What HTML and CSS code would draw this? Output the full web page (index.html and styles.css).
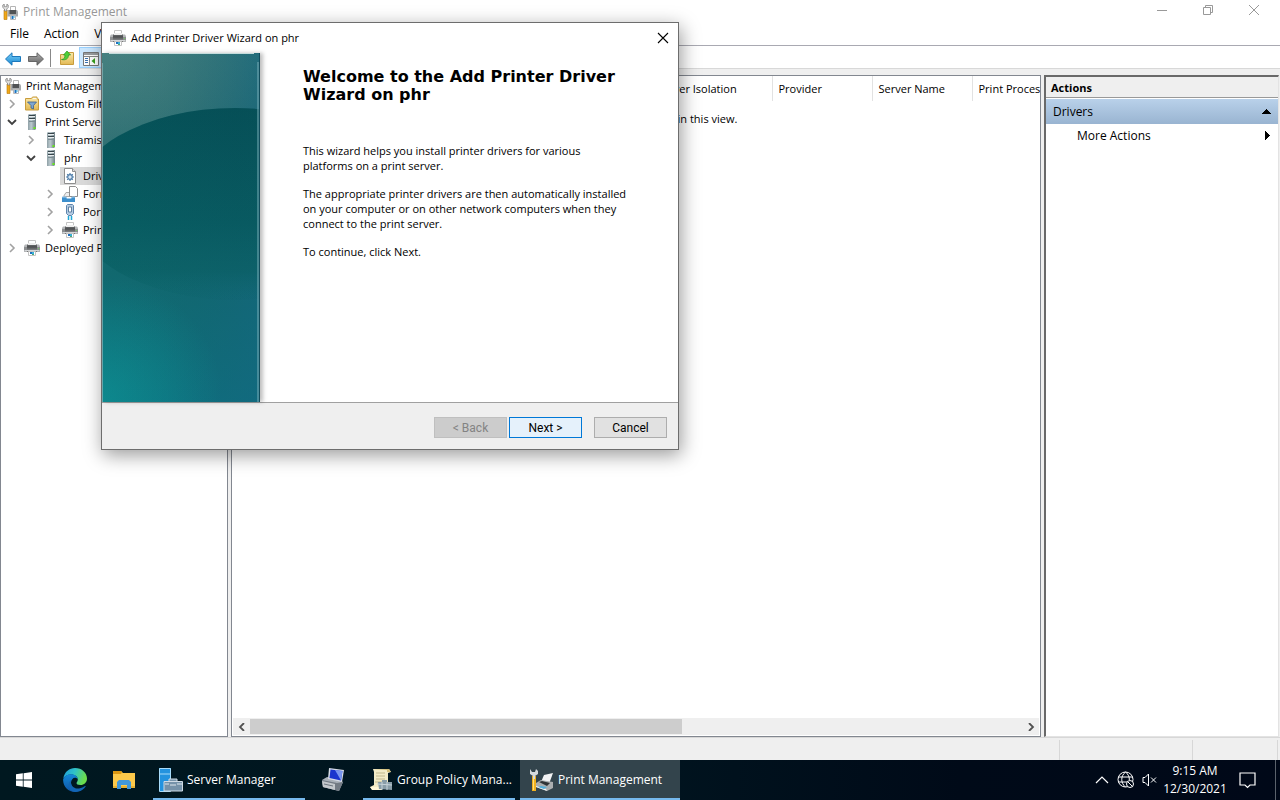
FILE: index.html
```html
<!DOCTYPE html>
<html lang="en">
<head>
<meta charset="utf-8">
<title>Print Management</title>
<link rel="stylesheet" href="styles.css">
</head>
<body>
<svg class="defs" width="0" height="0" aria-hidden="true">
  <defs>
    <linearGradient id="gMetal" x1="0" y1="0" x2="1" y2="0"><stop offset="0" stop-color="#8fa0a6"/><stop offset=".4" stop-color="#bccacf"/><stop offset="1" stop-color="#6f8086"/></linearGradient>
    <linearGradient id="gBody" x1="0" y1="0" x2="0" y2="1"><stop offset="0" stop-color="#6c6e70"/><stop offset=".4" stop-color="#4c4e50"/><stop offset="1" stop-color="#8a8c8e"/></linearGradient>
    <linearGradient id="gBlue" x1="0" y1="0" x2="0" y2="1"><stop offset="0" stop-color="#7cd0f8"/><stop offset="1" stop-color="#1585d0"/></linearGradient>
    <linearGradient id="gGray" x1="0" y1="0" x2="0" y2="1"><stop offset="0" stop-color="#b0b0b0"/><stop offset="1" stop-color="#606060"/></linearGradient>
    <linearGradient id="gFold" x1="0" y1="0" x2="0" y2="1"><stop offset="0" stop-color="#fbe9ac"/><stop offset="1" stop-color="#e2b954"/></linearGradient>
    <symbol id="printer" viewBox="0 0 16 16">
      <path d="M4.500 .5h7v5h-7z" fill="#fff" stroke="#c4c4c4"/>
      <path d="M1 4.500h14l1 1.500v6H0V6z" fill="#b4b6b8"/>
      <path d="M3 4.500h10v6H3z" fill="url(#gBody)"/>
      <path d="M4 3h8v2H4z" fill="#eee"/>
      <path d="M0 7h3v3H0zM13 7h3v3h-3z" fill="#8c8e90"/>
      <path d="M1 10.500h14" stroke="#d4d6d8"/>
      <path d="M3 11.500h10" stroke="#777"/>
      <path d="M4.500 11.500h7v4h-7z" fill="#fff" stroke="#c4c4c4"/>
      <path d="M6 12h2v2H6z" fill="#1d70c0"/><path d="M8 12h2v2H8z" fill="#38b0d8"/><path d="M8 14h2v1H8z" fill="#50a870"/>
      <path d="M14 8h1v1h-1z" fill="#70d060"/>
    </symbol>
    <symbol id="pmc" viewBox="0 0 16 16">
      <path d="M8.500 2.500h5v5h-5z" fill="#fff" stroke="#b4b4b4"/>
      <path d="M5.500 6H15l1 1.500v5H5.500z" fill="#a6a8aa"/><path d="M7.500 6H14v4H7.500z" fill="#505254"/>
      <path d="M8.500 11.500h5v4h-5z" fill="#fff" stroke="#b8b8b8"/><path d="M9.500 12h2v3h-2z" fill="#1d70c0"/><path d="M11.500 12h1v2h-1z" fill="#38b0d8"/>
      <path d="M2 6h3v9.500H2z" fill="#f0a818" stroke="#b87708" stroke-width=".6"/>
      <path d="M.8 1v2.500L2.500 5v2h2.200V5L6.200 3.500V1L4.800.2v2.500H2.300V.2z" fill="#e4e4e4" stroke="#777" stroke-width=".7"/>
    </symbol>
    <symbol id="server" viewBox="0 0 16 16">
      <path d="M4 1l1-1h7v15l-1 1H4z" fill="url(#gMetal)"/>
      <path d="M5 1.500h6M5 4.500h6" stroke="#38454b"/><path d="M5 2.500h6M5 5.500h6" stroke="#e8eef0"/>
      <path d="M5 7.500h6" stroke="#7c8c92"/><path d="M9.500 13h2v2h-2z" fill="#66e81c"/>
    </symbol>
    <symbol id="filter" viewBox="0 0 16 16">
      <path d="M1.500 2.500h6l1-1.500h4.500v2h1.500v11h-13z" fill="url(#gFold)" stroke="#c89c3c"/>
      <path d="M9 2h3.500v1H9z" fill="#f8f8f4"/>
      <path d="M3.500 6h9L9.500 9.500V13L7 12V9.500z" fill="#7ea6d0" stroke="#38618e" stroke-width=".8"/>
    </symbol>
    <symbol id="driver" viewBox="0 0 16 16">
      <path d="M2.500 .5h8l3 3v12h-11z" fill="#fff" stroke="#8e8e8e"/><path d="M10.500.5v3h3" fill="#ddd" stroke="#8e8e8e"/>
      <circle cx="8" cy="9" r="2.300" fill="#dbe9f6" stroke="#4d7ca8" stroke-width="1.200"/>
      <path d="M8 5v1.500M8 11.500V13M4 9h1.500M10.500 9H12M5.200 6.200l1 1M9.800 10.800l1 1M10.800 6.200l-1 1M6.200 10.800l-1 1" stroke="#4d7ca8" stroke-width="1.200"/>
    </symbol>
    <symbol id="forms" viewBox="0 0 16 16">
      <path d="M1.500 10.500L4 6.500h8l2 4z" fill="#eee" stroke="#aaa"/>
      <path d="M7.500.5h6l2 2v8h-8z" fill="#fff" stroke="#8e8e8e"/>
      <path d="M0 11h4l1 1.500h4L10 11h3v5H0z" fill="#3d8fcc"/><path d="M0 11h4l1 1.500h4L10 11h3" fill="none" stroke="#9ccbee"/>
    </symbol>
    <symbol id="port" viewBox="0 0 16 16">
      <path d="M4.500 1.500l1-1h5l1 1v8l-2 2h-3l-2-2z" fill="#b4cbe2" stroke="#5d84ac"/>
      <path d="M6.500 3h3v5h-3z" fill="#fff" stroke="#5f7f9f"/><path d="M6.500 12v4M9.500 12v4" stroke="#20a8d8" stroke-width="1.500"/>
    </symbol>
    <symbol id="right" viewBox="0 0 10 10"><path d="M3 1l4 4-4 4" fill="none" stroke="#a2a2a2" stroke-width="1.600"/></symbol>
    <symbol id="down" viewBox="0 0 10 10"><path d="M1 3l4 4 4-4" fill="none" stroke="#404040" stroke-width="1.800"/></symbol>
  </defs>
</svg>

<div class="desktop">
  <main class="window">
    <header class="titlebar">
      <svg class="icon"><use href="#pmc"/></svg>
      <h1 class="window-title">Print Management</h1>
      <div class="captions">
        <button class="caption" aria-label="Minimize"><svg width="12" height="12"><path d="M1 6.500h10" stroke="#999"/></svg></button>
        <button class="caption" aria-label="Restore"><svg width="12" height="12" fill="none" stroke="#999"><path d="M1.500 3.500h7v7h-7zM3.500 3V1.500h7v7H9"/></svg></button>
        <button class="caption" aria-label="Close"><svg width="12" height="12"><path d="M1 1l10 10M11 1L1 11" stroke="#999"/></svg></button>
      </div>
    </header>
    <nav class="menubar">
      <button class="menu">File</button><button class="menu">Action</button><button class="menu">View</button><button class="menu">Help</button>
    </nav>
    <div class="toolbar">
      <button class="tool" aria-label="Back"><svg width="16" height="14"><path d="M.5 7L7 .8v3.700h8.500v5H7v3.700z" fill="url(#gBlue)" stroke="#1c78bc"/></svg></button>
      <button class="tool" aria-label="Forward"><svg width="16" height="14"><path d="M15.500 7L9 .8v3.700H.5v5H9v3.700z" fill="url(#gGray)" stroke="#666"/></svg></button>
      <span class="divider"></span>
      <button class="tool up" aria-label="Up one level"><svg width="16" height="16"><path d="M1.500 4.500h6l1-2h6v12h-13z" fill="url(#gFold)" stroke="#c89c3c"/><path d="M2.500 9.500C5 9.500 6 8 6 5H4.500L8 1l3.500 4H9.500c0 4-3 5.500-7 4.500z" fill="#4fcf38" stroke="#279420" stroke-width=".7"/></svg></button>
      <button class="tool pressed" aria-label="Show or hide console tree"><svg width="16" height="14"><path d="M.5.500h15v13H.5z" fill="#fff" stroke="#777"/><path d="M1 1h14v2H1z" fill="#9a9da0"/><path d="M1 4.500h14M6.500 5v8" stroke="#888"/><path d="M2 6.500h3M2 8.500h3M2 10.500h3" stroke="#3b72b0"/><path d="M12 6v6L8.500 9z" fill="#35a01c"/></svg></button>
    </div>
    <div class="panes">
      <section class="tree" aria-label="Console tree">
        <div class="node root"><svg class="icon"><use href="#pmc"/></svg><span>Print Management</span></div>
        <div class="node l1"><svg class="arrow"><use href="#right"/></svg><svg class="icon"><use href="#filter"/></svg><span>Custom Filters</span></div>
        <div class="node l1"><svg class="arrow"><use href="#down"/></svg><svg class="icon"><use href="#server"/></svg><span>Print Servers</span></div>
        <div class="node l2"><svg class="arrow"><use href="#right"/></svg><svg class="icon"><use href="#server"/></svg><span>Tiramisu</span></div>
        <div class="node l2"><svg class="arrow"><use href="#down"/></svg><svg class="icon"><use href="#server"/></svg><span>phr</span></div>
        <div class="node l3"><span class="arrow"></span><span class="selected"><svg class="icon"><use href="#driver"/></svg><span>Drivers</span></span></div>
        <div class="node l3"><svg class="arrow"><use href="#right"/></svg><svg class="icon"><use href="#forms"/></svg><span>Forms</span></div>
        <div class="node l3"><svg class="arrow"><use href="#right"/></svg><svg class="icon"><use href="#port"/></svg><span>Ports</span></div>
        <div class="node l3"><svg class="arrow"><use href="#right"/></svg><svg class="icon"><use href="#printer"/></svg><span>Printers</span></div>
        <div class="node l1"><svg class="arrow"><use href="#right"/></svg><svg class="icon"><use href="#printer"/></svg><span>Deployed Printers</span></div>
      </section>
      <section class="list">
        <div class="list-view">
          <table class="grid">
            <colgroup><col class="c-name"><col class="c-iso"><col class="c-std"><col class="c-std"><col class="c-wide"></colgroup>
            <thead><tr><th>Driver Name</th><th>Driver Isolation</th><th>Provider</th><th>Server Name</th><th>Print Processor</th></tr></thead>
          </table>
          <p class="empty">There are no items to show in this view.</p>
        </div>
        <div class="scroll">
          <button class="scroll-btn" aria-label="Scroll left"><svg width="8" height="8"><path d="M6 0L2 4l4 4" fill="none" stroke="#505050" stroke-width="1.800"/></svg></button>
          <div class="track"><div class="thumb"></div></div>
          <button class="scroll-btn" aria-label="Scroll right"><svg width="8" height="8"><path d="M2 0l4 4-4 4" fill="none" stroke="#505050" stroke-width="1.800"/></svg></button>
        </div>
      </section>
      <aside class="actions">
        <h2 class="actions-title">Actions</h2>
        <button class="group"><span>Drivers</span><svg width="9" height="5" shape-rendering="crispEdges"><path d="M4.500 0L9 5H0z"/></svg></button>
        <button class="action"><span>More Actions</span><svg width="5" height="9" shape-rendering="crispEdges"><path d="M0 0l5 4.500L0 9z"/></svg></button>
      </aside>
    </div>
    <footer class="status"><span class="cell"></span><span class="cell mid"></span><span class="cell last"></span></footer>

    <div class="dialog" role="dialog" aria-labelledby="dlg">
      <header class="dialog-bar">
        <svg class="icon"><use href="#printer"/></svg><span id="dlg">Add Printer Driver Wizard on phr</span>
        <button class="dialog-close" aria-label="Close"><svg width="12" height="12"><path d="M1 1l10 10M11 1L1 11" stroke="#000" stroke-width="1.100"/></svg></button>
      </header>
      <div class="dialog-body">
        <svg class="banner" viewBox="0 0 158 349" preserveAspectRatio="none" aria-hidden="true">
          <defs>
            <linearGradient id="b0" x1="0" y1="0" x2="0" y2="1"><stop offset="0" stop-color="#387678"/><stop offset=".25" stop-color="#2a6c70"/><stop offset=".62" stop-color="#11686e"/><stop offset="1" stop-color="#0e7080"/></linearGradient>
            <linearGradient id="b1" x1="0" y1="0" x2="1" y2="0"><stop offset="0" stop-color="#146870" stop-opacity="0"/><stop offset=".4" stop-color="#14606e" stop-opacity=".1"/><stop offset="1" stop-color="#14667e" stop-opacity=".6"/></linearGradient>
            <radialGradient id="b5" gradientUnits="userSpaceOnUse" cx="10" cy="0" r="150"><stop offset="0" stop-color="#5a908c" stop-opacity=".4"/><stop offset="1" stop-color="#5a908c" stop-opacity="0"/></radialGradient>
            <radialGradient id="b2" gradientUnits="userSpaceOnUse" cx="0" cy="345" r="120"><stop offset="0" stop-color="#0c9896" stop-opacity=".6"/><stop offset="1" stop-color="#0c9896" stop-opacity="0"/></radialGradient>
            <linearGradient id="b3" x1="0" y1="0" x2="0" y2="1"><stop offset="0" stop-color="#054e55"/><stop offset=".6" stop-color="#085a60"/><stop offset=".85" stop-color="#0b6066" stop-opacity=".8"/><stop offset="1" stop-color="#0d666e" stop-opacity="0"/></linearGradient>
            <linearGradient id="b4" x1="0" y1="0" x2="1" y2="0"><stop offset="0" stop-color="#087068" stop-opacity=".3"/><stop offset=".5" stop-color="#0c5a68" stop-opacity=".2"/><stop offset="1" stop-color="#10607a" stop-opacity=".5"/></linearGradient>
          </defs>
          <path d="M0 0h158v349H0z" fill="url(#b0)"/><path d="M0 0h158v349H0z" fill="url(#b1)"/><path d="M0 0h158v349H0z" fill="url(#b5)"/><path d="M0 0h158v349H0z" fill="url(#b2)"/>
          <ellipse cx="133" cy="151" rx="165" ry="96" fill="url(#b3)"/><ellipse cx="133" cy="151" rx="165" ry="96" fill="url(#b4)" opacity=".5"/>
          <path d="M7 .5h145" stroke="#c4dcdc"/><path d="M.5 10v339" stroke="#8cb4b8" stroke-opacity=".7"/><path d="M156 9v340" stroke="#79adb8" stroke-width="1"/><path d="M157.500 0v349" stroke="#104c5c"/>
        </svg>
        <div class="copy">
          <h2 class="welcome">Welcome to the Add Printer Driver Wizard on phr</h2>
          <p>This wizard helps you install printer drivers for various platforms on a print server.</p>
          <p>The appropriate printer drivers are then automatically installed on your computer or on other network computers when they connect to the print server.</p>
          <p>To continue, click Next.</p>
        </div>
      </div>
      <footer class="dialog-foot">
        <button class="btn" disabled>&lt; Back</button><button class="btn primary">Next &gt;</button><button class="btn cancel">Cancel</button>
      </footer>
    </div>
  </main>

  <nav class="taskbar">
    <button class="task slim" aria-label="Start"><svg width="16" height="16" fill="#fff"><path d="M0 2.300L6.800 1.300V7.600H0zM7.600 1.200L16 0v7.600H7.600zM0 8.400h6.800v6.300L0 13.700zM7.600 8.400H16V16l-8.400-1.200z"/></svg></button>
    <button class="task slim edge" aria-label="Microsoft Edge"><svg width="24" height="24" viewBox="0 0 24 24"><defs><linearGradient id="e1" x1="0" y1="0" x2="1" y2=".3"><stop offset="0" stop-color="#1e9bdc"/><stop offset=".5" stop-color="#2fc2c8"/><stop offset="1" stop-color="#6bdc4c"/></linearGradient><linearGradient id="e2" x1="0" y1="0" x2="0" y2="1"><stop offset="0" stop-color="#1388d8"/><stop offset="1" stop-color="#0f55a6"/></linearGradient></defs><path d="M.3 10.500C1.500 3.500 6.500 0 12 0c7 0 12 5 12 10.500 0 4-3 6.500-6.500 6.500-3 0-4-1-4-2 0-.8 1.300-1.500 1.300-3.500 0-2.500-2.500-5-6.800-5-3.500 0-6.500 2-7.700 4z" fill="url(#e1)"/><path d="M.2 11C1.500 8 4.500 6.300 8 6.300c4.500 0 6.800 2.700 6.800 5-.5-1-1.500-1.600-2.800-1.600-2 0-4 2-4 5 0 4.300 4 8.300 11 6.800-2 1.600-4.300 2.500-7 2.500C5 24-.5 18 .2 11z" fill="url(#e2)"/><path d="M8 14.500c0 4 4 6.500 8 6 2.500-.3 4.500-1.500 6-2.500.5-.3.900.1.600.6C19 24 13 24.500 10 23.500 5.500 21.500 4 16 8 12z" fill="#1265b4"/></svg></button>
    <button class="task slim explorer" aria-label="File Explorer"><svg width="22" height="20"><path d="M0 1h8l2 2h12v15H0z" fill="#fdc94a"/><path d="M0 1h8l1 1-1 2H0z" fill="#dc9712"/><path d="M0 16h22v2H0z" fill="#e8b134"/><path d="M4 19v-7l2-2h10l2 2v7h-4v-4H8v4z" fill="#4197da"/></svg></button>
    <button class="task wide open"><svg width="24" height="24"><path d="M0 0h12v23H0z" fill="#2393df"/><path d="M.5.500h11v23H.5zM1 6h10" fill="none" stroke="#a8dcfa"/><path d="M10 13v-2h8v2M5 13.500h18.500v9.500H5z" fill="#7592a9" stroke="#cfdbe5"/><path d="M6 16h4M11 17h6M18 16h5" stroke="#dfe8ee"/></svg><span>Server Manager</span></button>
    <button class="task slim users" aria-label="Remote computers"><svg width="24" height="24"><path d="M1 12l5-3 11 2 5 3-4 9-16-4z" fill="#a9b0b8"/><path d="M1 12l15 3 6-1-4 9-16-4z" fill="#737b84"/><path d="M1 13l13 3v6L2 19z" fill="#c4c8cc"/><path d="M3 16l9 2" stroke="#6d757e"/><path d="M8 0l15 2-2 12L7 11z" fill="#d6dbe5"/><path d="M9.500 1.500L21.500 3 20 12.500 8.500 10z" fill="#1935ce"/><path d="M14 2l7.500 1L20 12.500z" fill="#7895ef"/></svg></button>
    <button class="task policy open"><svg width="24" height="24"><path d="M3 1h16l2 3-3 1v16H2l-2-2 4-2V4z" fill="#f3ebc6"/><path d="M3 1h16l2 3h-4V2z" fill="#d2bd78"/><path d="M6 5h9M6 8h9M6 11h9M5 14h8" stroke="#c1b88e"/><path d="M0 19h12v3H2z" fill="#fff6d6"/><path d="M8 14h4v-2h5v2h5v8l-13-1z" fill="#899da8"/><path d="M7 16l15 1M12 14v8M17 14v8" stroke="#c7d3da"/></svg><span>Group Policy Mana...</span></button>
    <button class="task current open"><svg width="24" height="24"><path d="M2 8h4v15H2z" fill="#f0b01f"/><path d="M3 9h1v13H3z" fill="#ffe07c"/><path d="M0 1l2 3h3L6 1l2 2v3L5 8v3H3V8L0 6z" fill="#d5dadd"/><path d="M14 7l9-2-4 11-8-2z" fill="#f2f3f4"/><path d="M6 15l5-3 12 2v6l-6 3-11-4z" fill="#aaaeb0"/><path d="M9 14l3-1 8 2-3 3z" fill="#303436"/><path d="M6 18l10 3 1 2-11-4z" fill="#f4f4f4"/><path d="M11 18l6 1-3 2-6-2z" fill="#52b0dc"/></svg><span>Print Management</span></button>
    <div class="tray">
      <button class="tray-btn" aria-label="Show hidden icons"><svg width="14" height="8"><path d="M1 7l6-6 6 6" fill="none" stroke="#fff" stroke-width="1.200"/></svg></button>
      <button class="tray-btn" aria-label="Network"><svg width="18" height="18" fill="none" stroke="#fff"><circle cx="8.500" cy="8.500" r="7.500"/><path d="M8.500 1c-5 4-5 11 0 15M8.500 1c3 2.500 4 5 3.800 8M1 6h15M1 11h9"/><circle cx="13" cy="13" r="3.500" fill="#000a18"/><path d="M10.500 10.500l5 5"/></svg></button>
      <button class="tray-btn" aria-label="Volume muted"><svg width="16" height="14" fill="none" stroke="#fff"><path d="M1 4.500h2L6.500 1v12L3 9.500H1zM9 4.500l5 5M14 4.500l-5 5"/></svg></button>
      <time class="clock"><span>9:15 AM</span><span>12/30/2021</span></time>
      <button class="tray-btn notes" aria-label="Notifications"><svg width="18" height="17" fill="none" stroke="#fff" stroke-width="1.200"><path d="M1 1h15v12h-5l-2.500 2.500L6 13H1z"/></svg></button>
      <span class="peek"></span>
    </div>
  </nav>
</div>
</body>
</html>
```
FILE: styles.css
```css
* { box-sizing: border-box; }
body { margin: 0; background: #efefef; color: #000; font: 12px/18px "Open Sans", "Noto Sans", sans-serif; }
button { margin: 0; padding: 0; border: 0; background: none; color: inherit; font: inherit; }
h1, h2, p { margin: 0; font-weight: normal; font-size: inherit; }
svg { display: block; flex: none; }
.defs { position: absolute; }
.icon { width: 16px; height: 16px; flex: none; }

.desktop { display: flex; flex-direction: column; min-height: 100vh; overflow: hidden; }
.window { position: relative; flex: 1; display: flex; flex-direction: column; background: #efefef; }

.titlebar { display: flex; align-items: center; gap: 5px; height: 23px; padding-left: 2px; background: #fff; }
.window-title { color: #999; }
.captions { display: flex; margin-left: auto; align-self: flex-start; padding-right: 3px; }
.caption { display: flex; align-items: center; justify-content: center; width: 46px; height: 20px; }
.menubar { display: flex; height: 23px; padding: 0 0 0 10px; background: #fff; border-bottom: 1px solid #a9a9b2; }
.menu { height: 21px; padding-right: 15px; }
.toolbar { display: flex; align-items: center; height: 23px; padding: 1px 0 0 4px; background: #fff; border-bottom: 1px solid #d8d8d8; }
.tool { display: flex; align-items: center; justify-content: center; width: 23px; height: 20px; padding: 2px 5px 0 0; }
.tool.up { padding: 1px 1px 0 0; }
.tool.pressed { height: 21px; padding: 2px 0 0; background: #cce8ff; border: 1px solid #99d1ff; }
.divider { width: 1px; height: 18px; margin-right: 5px; background: #888; }

.panes { flex: 1; display: grid; grid-template-columns: 228px minmax(0, 1fr) 235px; padding: 6px 1px 0 0; }
.tree { overflow: hidden; padding-top: 1px; background: #fff; border: 1px solid #828790; font-size: 11px; white-space: nowrap; }
.node { display: flex; align-items: center; height: 18px; gap: 5px; }
.root { padding-left: 4px; }
.l1 { padding-left: 6px; }
.l2 { padding-left: 25px; }
.l3 { padding-left: 44px; }
.arrow { width: 10px; height: 10px; flex: none; margin-right: 2px; }
.selected { display: flex; align-items: center; gap: 5px; height: 18px; margin-left: -2px; padding: 0 3px 0 2px; background: #d9d9d9; }

.list { display: flex; flex-direction: column; min-width: 0; margin: 0 3px; background: #fff; border: 1px solid #828790; font-size: 11px; }
.list-view { flex: 1; overflow: hidden; }
.grid { width: 100%; table-layout: fixed; border-collapse: collapse; }
.c-name { width: 420px; }
.c-iso { width: 120px; }
.c-std { width: 100px; }
.grid th { height: 25px; padding: 0 0 0 6px; border-right: 1px solid #e2e2e2; font-weight: normal; text-align: left; white-space: nowrap; overflow: hidden; }
.grid th:last-child { border-right: 0; }
.empty { margin-top: 9px; text-align: center; }
.scroll { display: flex; height: 17px; margin: 0 1px 1px; background: #efefef; }
.scroll-btn { display: flex; align-items: center; justify-content: center; width: 17px; }
.track { flex: 1; }
.thumb { width: 56%; height: 15px; margin-top: 1px; background: #cdcdcd; }

.actions { display: flex; flex-direction: column; background: #fff; border: 2px solid #696969; border-width: 2px 1px 1px 2px; border-right-color: #e3e3e3; border-bottom-color: #e3e3e3; }
.actions-title { height: 21px; padding-left: 5px; background: #efefef; border-bottom: 1px solid #999; font-size: 11px; font-weight: bold; line-height: 21px; }
.group { display: flex; align-items: center; justify-content: space-between; height: 26px; padding: 0 7px; border-top: 1px solid #fff; background: linear-gradient(#b9d1ea, #99b4d1); }
.action { display: flex; align-items: center; justify-content: space-between; height: 23px; padding: 0 8px 0 31px; }

.status { display: flex; justify-content: flex-end; height: 23px; padding: 2px 1px 0 0; border-top: 1px solid #d7d7d7; }
.cell { width: 133px; height: 20px; border-left: 1px solid #d7d7d7; }
.cell.mid { width: 85px; }
.cell.last { width: 2px; }

.dialog { position: absolute; left: 101px; top: 22px; width: 578px; background: #fff; border: 1px solid #6d6d6d; box-shadow: 2px 5px 18px rgba(0, 0, 0, .4); font-size: 11px; }
.dialog-bar { display: flex; align-items: center; gap: 5px; height: 30px; padding: 0 9px 0 8px; }
.dialog-close { margin-left: auto; }
.dialog-body { display: flex; }
.banner { width: 158px; height: 349px; box-shadow: 3px 0 4px rgba(0, 0, 0, .25); }
.copy { flex: 1; padding: 15px 48px 0 43px; line-height: 15px; }
.welcome { margin-bottom: 39px; font: bold 16px/18px "DejaVu Sans", sans-serif; }
.copy p { margin-bottom: 13px; }
.dialog-foot { display: flex; justify-content: flex-end; height: 47px; padding: 14px 11px 0; border-top: 1px solid #a0a0a0; background: #efefef; }
.btn { width: 73px; height: 21px; margin-left: 2px; background: #e1e1e1; border: 1px solid #adadad; font: 12px/18px Roboto, sans-serif; }
.btn:disabled { background: #ccc; border-color: #bfbfbf; color: #838383; }
.btn.primary { background: #e5f1fb; border-color: #0078d7; }
.btn.cancel { margin-left: 12px; }

.taskbar { display: flex; height: 40px; background: linear-gradient(90deg, #001820, #00141f 50%, #000a18 75%, #000818); color: #fff; }
.task { display: flex; align-items: center; white-space: nowrap; }
.slim { justify-content: center; width: 48px; }
.edge { width: 54px; }
.explorer { width: 44px; }
.users { width: 56px; }
.open { border-bottom: 2px solid #76b9ed; padding: 2px 6px 0; gap: 4px; }
.wide { width: 152px; margin-left: 7px; }
.policy { width: 152px; margin: 0 5px 0 2px; padding-left: 7px; gap: 3px; }
.current { width: 160px; padding-left: 10px; background: #33444c; }
.tray { display: flex; align-items: center; margin-left: auto; }
.tray-btn { display: flex; align-items: center; justify-content: center; width: 24px; height: 40px; }
.clock { display: flex; flex-direction: column; align-items: center; width: 66px; line-height: 18px; }
.notes { width: 39px; }
.peek { width: 1px; height: 40px; margin: 0 4px 0 8px; background: #5b626c; }
```
